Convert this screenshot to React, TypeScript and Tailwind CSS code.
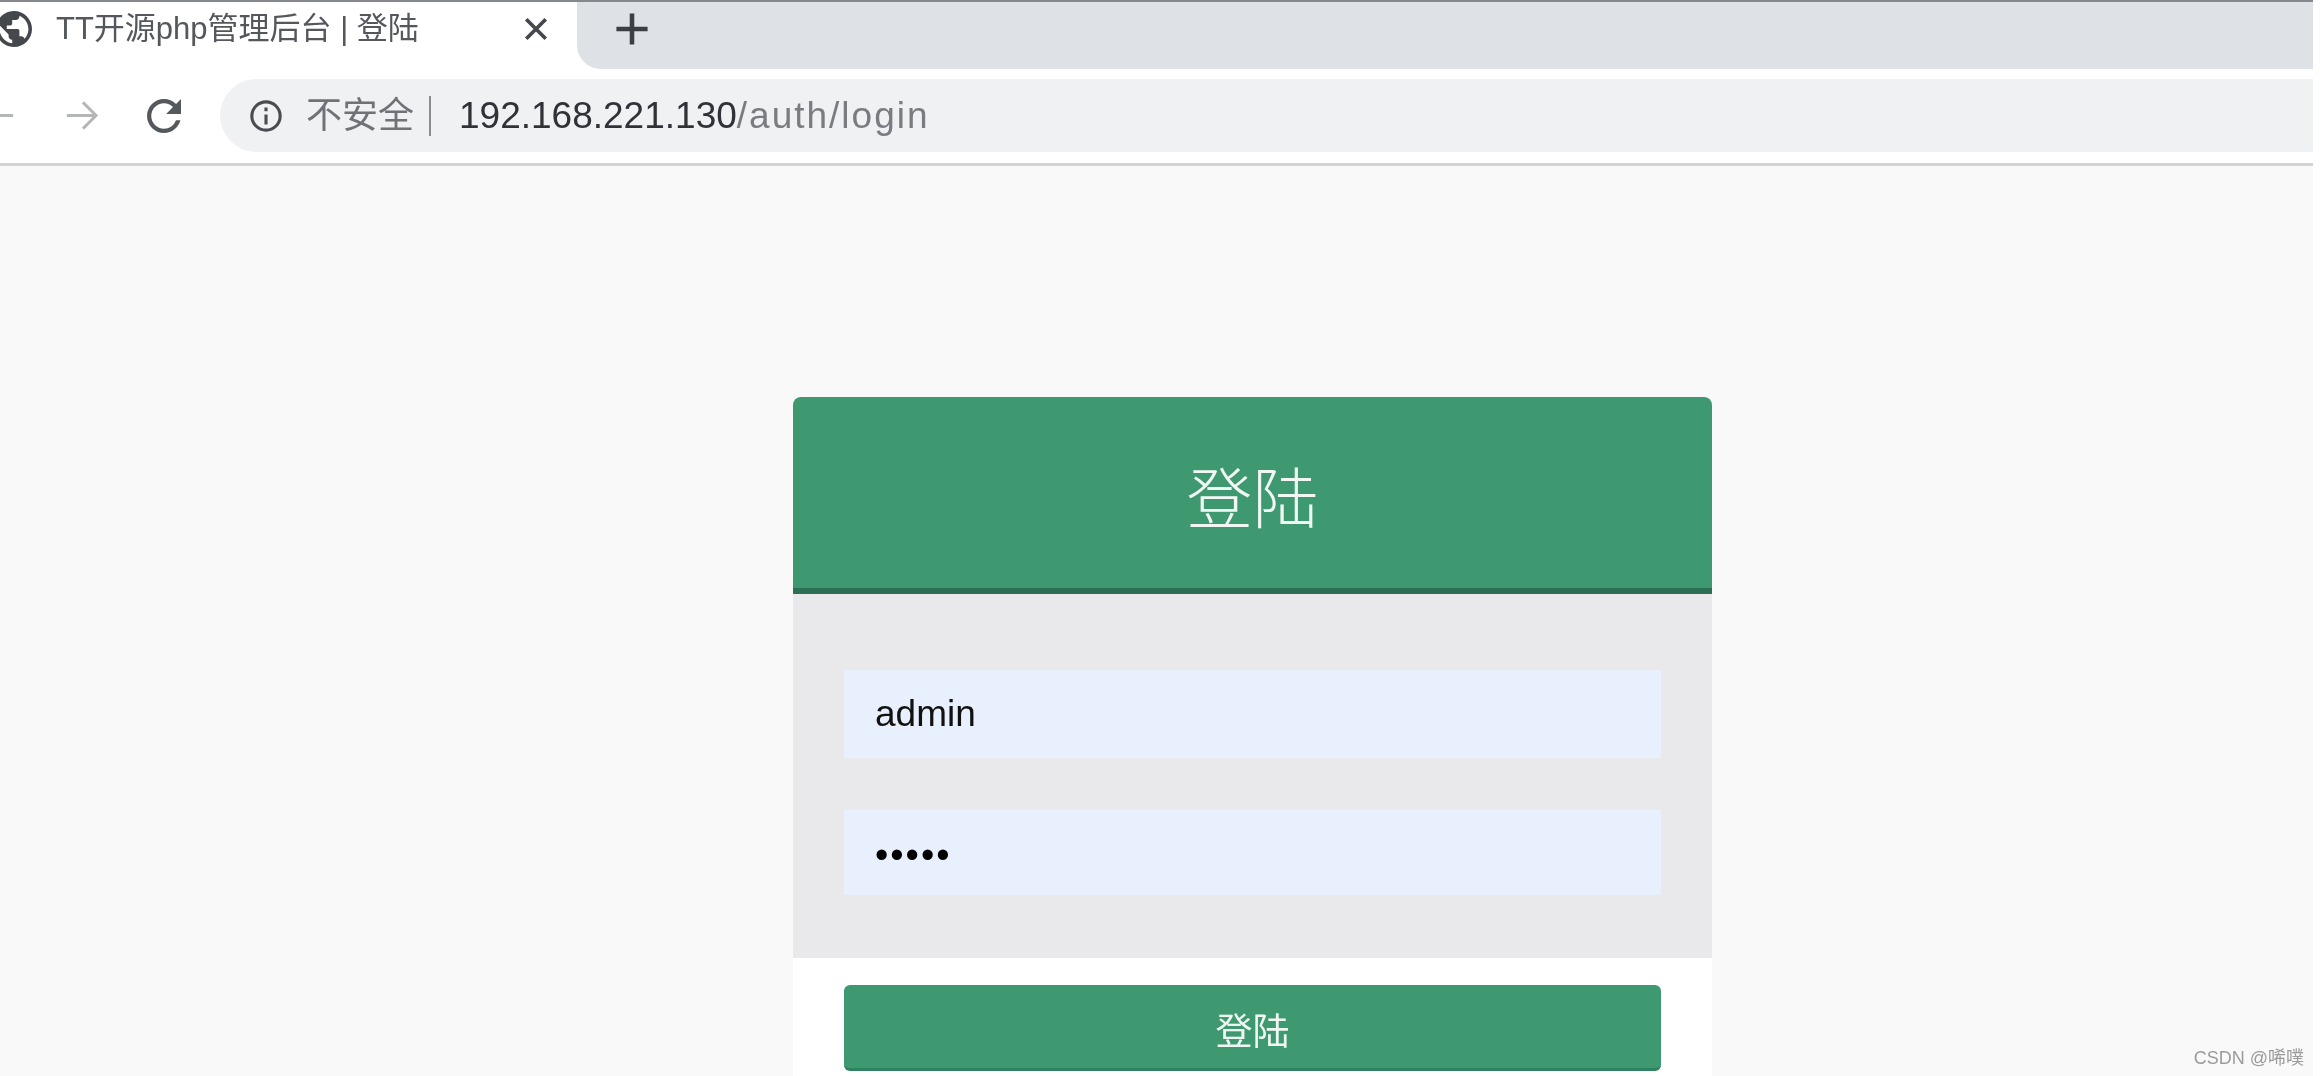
const App = () => {
  return (
    <div className="flex h-[1076px] w-[2320px] overflow-hidden bg-white [font-family:'Liberation_Sans','Noto_Sans_CJK_SC',sans-serif]">
      <div className="relative flex h-full w-[2313px] flex-col">
        {/* tab strip */}
        <div className="flex h-[69px] shrink-0 border-t-2 border-[#85888c]">
          <div className="flex w-[577px] items-center bg-white pb-[14px]">
            <svg viewBox="2 2 20 20" className="-ml-[4px] h-[36px] w-[36px] shrink-0 blur-[0.5px]" fill="#44474c">
              <path d="M12 2C6.48 2 2 6.48 2 12s4.48 10 10 10 10-4.48 10-10S17.52 2 12 2zm-1 17.93c-3.95-.49-7-3.85-7-7.93 0-.62.08-1.21.21-1.79L9 15v1c0 1.1.9 2 2 2v1.93zm6.9-2.54c-.26-.81-1-1.39-1.9-1.39h-1v-3c0-.55-.45-1-1-1H8v-2h2c.55 0 1-.45 1-1V7h2c1.1 0 2-.9 2-2v-.41c2.93 1.19 5 4.06 5 7.41 0 2.08-.8 3.97-2.1 5.39z" />
            </svg>
            <span className="ml-[24px] flex-1 text-[31px] leading-none whitespace-nowrap text-[#54585d] blur-[0.6px]">
              TT开源php管理后台 | 登陆
            </span>
            <svg viewBox="0 0 24 24" className="mr-[28px] h-[26px] w-[26px] shrink-0 blur-[0.5px]" stroke="#44474c" strokeWidth="3.4" fill="none">
              <path d="M3 3l18 18M21 3L3 21" />
            </svg>
          </div>
          <div className="flex flex-1 items-center rounded-bl-[24px] bg-[#dee1e6] pb-[14px] pl-[38px]">
            <svg viewBox="0 0 24 24" className="h-[34px] w-[34px] blur-[0.5px]" stroke="#3b3e42" strokeWidth="3.2" fill="none">
              <path d="M12 1v22M1 12h22" />
            </svg>
          </div>
        </div>

        {/* toolbar */}
        <div className="flex h-[97px] shrink-0 items-start border-b-[3px] border-[#d2d3d4] bg-white pt-[10px]">
          <div className="-ml-[19px] flex h-[73px] w-[239px] shrink-0 items-center gap-[48px]">
            <svg viewBox="0 0 24 24" className="h-[35px] w-[35px] shrink-0 blur-[0.5px]" stroke="#b4b6b8" strokeWidth="2" fill="none">
              <path d="M22 12H3M11 3l-9 9 9 9" />
            </svg>
            <svg viewBox="0 0 24 24" className="h-[35px] w-[35px] shrink-0 blur-[0.5px]" stroke="#b4b6b8" strokeWidth="2" fill="none">
              <path d="M2 12h19M13 3l9 9-9 9" />
            </svg>
            <svg viewBox="4 4 16 16" className="h-[34px] w-[34px] shrink-0 blur-[0.5px]" fill="#55585c">
              <path d="M17.65 6.35A7.958 7.958 0 0 0 12 4c-4.42 0-7.99 3.58-7.99 8s3.57 8 7.99 8c3.73 0 6.84-2.55 7.73-6h-2.08A5.99 5.99 0 0 1 12 18c-3.31 0-6-2.69-6-6s2.69-6 6-6c1.66 0 3.14.69 4.22 1.78L13 11h7V4l-2.35 2.35z" />
            </svg>
          </div>
          <div className="flex h-[73px] flex-1 items-center rounded-l-[37px] bg-[#f0f1f3] pl-[29px]">
            <svg viewBox="0 0 24 24" className="h-[34px] w-[34px] shrink-0 blur-[0.5px]" fill="none" stroke="#494c50" strokeWidth="2.2">
              <circle cx="12" cy="12" r="10" />
              <path d="M12 11v7M12 6v2.6" />
            </svg>
            <span className="ml-[23px] text-[36px] leading-none whitespace-nowrap text-[#6f7276] blur-[0.6px]">不安全</span>
            <span className="ml-[15px] h-[40px] w-[2px] bg-[#8b8d90]" />
            <span className="ml-[28px] text-[37px] leading-none whitespace-nowrap text-[#2f3236] blur-[0.6px]">
              192.168.221.130<span className="tracking-[2px] text-[#797c80]">/auth/login</span>
            </span>
          </div>
        </div>

        {/* page */}
        <div className="flex-1 bg-[#f9f9f9] pt-[231px] pl-[793px]">
          <div className="flex w-[919px] flex-col">
            <div className="flex h-[197px] shrink-0 items-center justify-center rounded-t-[8px] border-b-[6px] border-[#2d6f52] bg-[#3e9970] pt-[14px]">
              <h1 className="text-[66px] leading-none font-light text-[#f1f8f4] blur-[0.4px]">登陆</h1>
            </div>
            <div className="flex h-[364px] shrink-0 flex-col gap-[52px] bg-[#e9e9eb] px-[51px] pt-[76px]">
              <input
                defaultValue="admin"
                className="h-[88px] w-full shrink-0 bg-[#e8f0fd] pl-[31px] text-[37px] text-[#111] outline-none blur-[0.6px]"
              />
              <input
                type="password"
                defaultValue="admin"
                className="h-[85px] w-full shrink-0 bg-[#e8f0fd] pt-[6px] pl-[31px] text-[38px] tracking-[2px] text-black outline-none blur-[0.5px]"
              />
            </div>
            <div className="h-[200px] shrink-0 bg-white px-[51px] pt-[27px]">
              <button className="flex h-[86px] w-full items-center justify-center rounded-[6px] border-b-[3px] border-[#2f8260] bg-[#3e9970] pt-[12px] text-[37px] leading-none text-[#eef7f2]">
                <span className="blur-[0.4px]">登陆</span>
              </button>
            </div>
          </div>
        </div>

        <span className="absolute right-[9px] bottom-[9px] text-[18px] leading-none whitespace-nowrap text-[#9b9b9b] blur-[0.3px]">
          CSDN @唏噗
        </span>
      </div>
    </div>
  );
};

export default App;
